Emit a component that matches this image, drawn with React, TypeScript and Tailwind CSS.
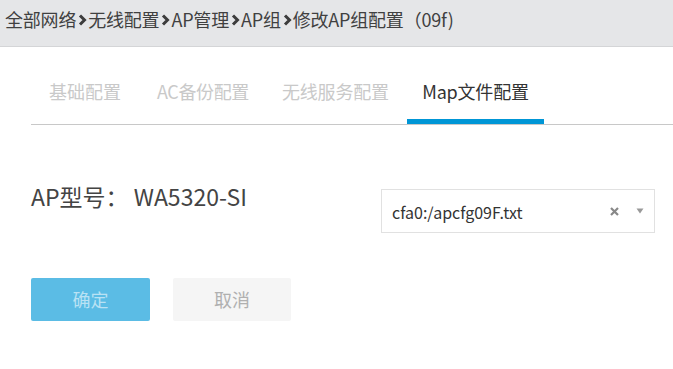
import React from "react";

const font = { fontFamily: '"Noto Sans CJK SC", "Noto Sans", sans-serif' };

export default function App() {
  const crumbs = ["全部网络", "无线配置", "AP管理", "AP组", "修改AP组配置（09f)"];
  return (
    <div className="w-[673px] h-[369px] bg-white overflow-hidden" style={font}>
      <div className="h-[47px] bg-[#e5e6e8] border-b border-[#d4d5d7] flex items-center pl-[5px] pb-[8px]">
        {crumbs.map((c, i) => (
          <React.Fragment key={i}>
            {i > 0 && (
              <svg width="10" height="12" viewBox="0 0 10 12" className="mx-[1px] mt-[1px]">
                <path d="M3 1.5 L7.5 6 L3 10.5" fill="none" stroke="#3c3c3c" strokeWidth="3" />
              </svg>
            )}
            <span className="text-[18px] text-[#404040] leading-none tracking-[-0.2px]">{c}</span>
          </React.Fragment>
        ))}
      </div>

      <div className="ml-[31px] mt-[25px] flex border-b border-[#c8c8c8] h-[53px]">
        <div className="flex items-start pt-[8px]">
          <span className="ml-[18px] w-[72px] text-[18px] text-[#c9c9c9] leading-[22px] whitespace-nowrap">基础配置</span>
          <span className="ml-[36px] w-[89px] text-[18px] text-[#c9c9c9] leading-[22px] whitespace-nowrap tracking-[-0.4px]">AC备份配置</span>
          <span className="ml-[36px] w-[106px] text-[18px] text-[#c9c9c9] leading-[22px] whitespace-nowrap tracking-[-0.2px]">无线服务配置</span>
        </div>
        <div className="ml-[19px] w-[137px] flex flex-col items-center">
          <span className="pt-[8px] text-[18px] text-[#333] leading-[22px] flex-1 tracking-[-0.2px]">Map文件配置</span>
          <div className="w-full h-[5px] bg-[#0096d6]" />
        </div>
      </div>

      <div className="flex items-start mt-[64px] ml-[31px]">
        <span className="text-[23px] text-[#444] leading-[26px] mt-[-6px] w-[350px] whitespace-nowrap">AP型号：&nbsp;WA5320-SI</span>
        <div className="w-[274px] h-[44px] border border-[#e1e1e1] flex items-center pl-[10px] pr-[10px]">
          <span className="flex-1 text-[16px] text-[#333] mt-[2px]">cfa0:/apcfg09F.txt</span>
          <svg width="9" height="9" viewBox="0 0 9 9" className="mr-[17px]">
            <path d="M1 1 L8 8 M8 1 L1 8" stroke="#888" strokeWidth="2.2" />
          </svg>
          <svg width="8" height="6" viewBox="0 0 8 6">
            <path d="M0.5 0.5 L7.5 0.5 L4 5.5 Z" fill="#999" />
          </svg>
        </div>
      </div>

      <div className="flex ml-[31px] mt-[45px] gap-[23px]">
        <div className="w-[119px] h-[43px] rounded-[2px] bg-[#5bbce5] flex items-center justify-center text-[18px] text-[#b9e2f4]">确定</div>
        <div className="w-[118px] h-[43px] rounded-[2px] bg-[#f5f5f5] flex items-center justify-center text-[18px] text-[#b0b0b0]">取消</div>
      </div>
    </div>
  );
}
